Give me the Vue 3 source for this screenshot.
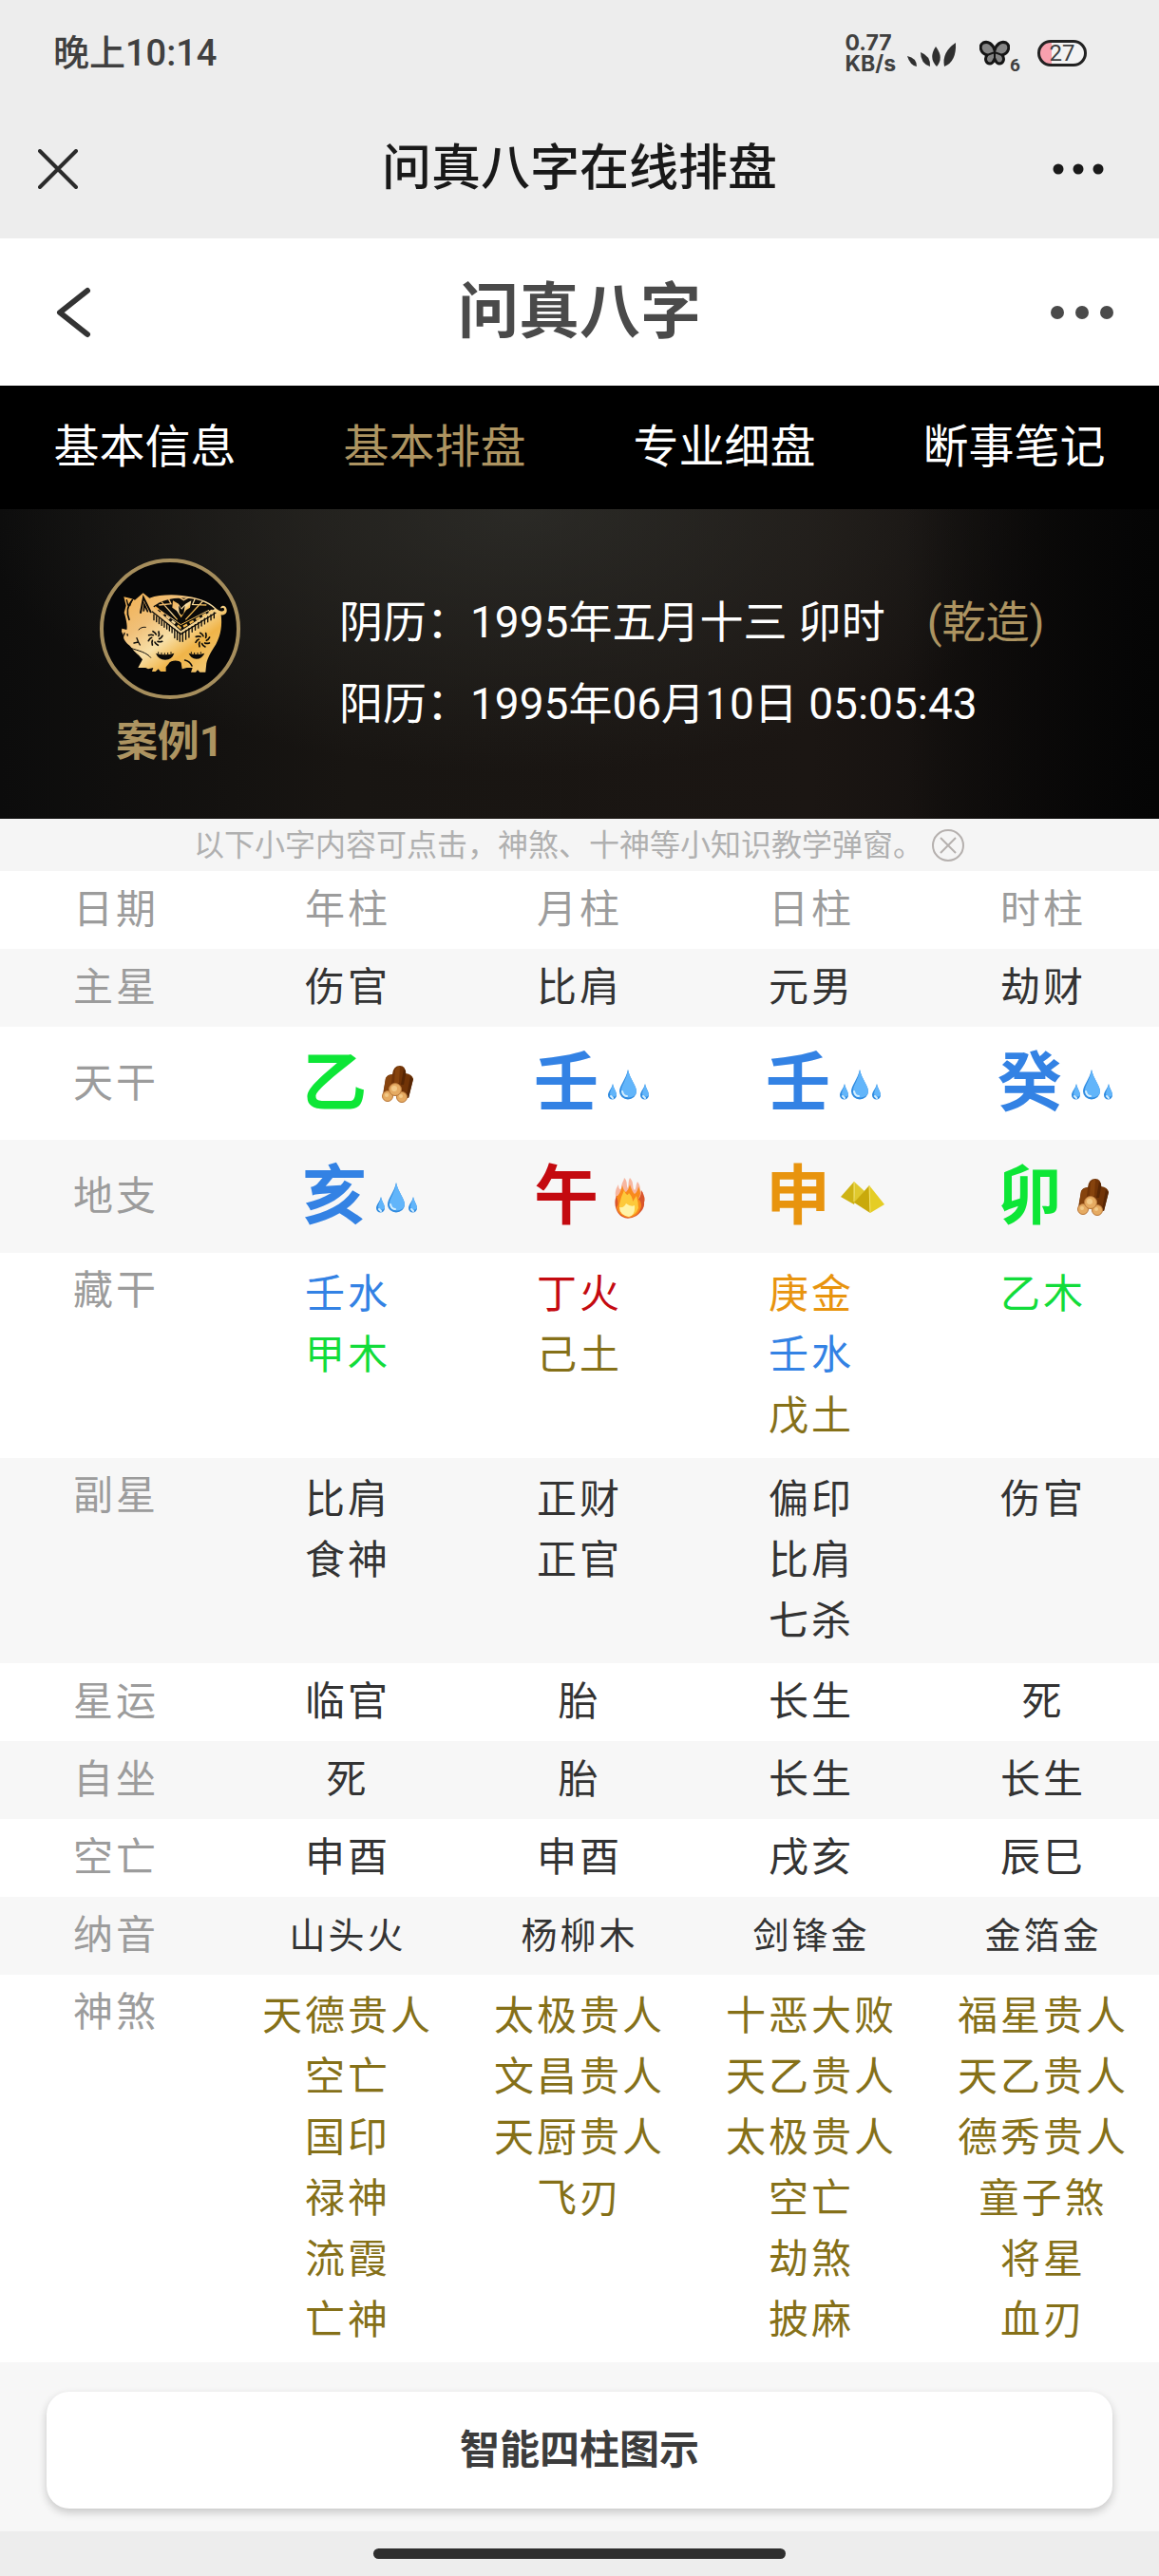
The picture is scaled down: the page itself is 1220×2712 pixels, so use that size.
<script setup>
import { ref } from 'vue'

const tabs = ['基本信息', '基本排盘', '专业细盘', '断事笔记']
const activeTab = ref(1)
const showHint = ref(true)

const heads = ['年柱', '月柱', '日柱', '时柱']
const stems = [
  { char: '乙', kind: 'wood' },
  { char: '壬', kind: 'water' },
  { char: '壬', kind: 'water' },
  { char: '癸', kind: 'water' },
]
const branches = [
  { char: '亥', kind: 'water' },
  { char: '午', kind: 'fire' },
  { char: '申', kind: 'metal' },
  { char: '卯', kind: 'wood' },
]
const rows = [
  { label: '主星', cells: ['伤官', '比肩', '元男', '劫财'] },
  { label: '天干', big: stems },
  { label: '地支', big: branches },
  {
    label: '藏干',
    lists: [
      [['壬水', 'water'], ['甲木', 'wood']],
      [['丁火', 'fire'], ['己土', 'earth']],
      [['庚金', 'metal'], ['壬水', 'water'], ['戊土', 'earth']],
      [['乙木', 'wood']],
    ],
  },
  {
    label: '副星',
    lists: [
      [['比肩'], ['食神']],
      [['正财'], ['正官']],
      [['偏印'], ['比肩'], ['七杀']],
      [['伤官']],
    ],
  },
  { label: '星运', cells: ['临官', '胎', '长生', '死'] },
  { label: '自坐', cells: ['死', '胎', '长生', '长生'] },
  { label: '空亡', cells: ['申酉', '申酉', '戌亥', '辰巳'] },
  { label: '纳音', small: true, cells: ['山头火', '杨柳木', '剑锋金', '金箔金'] },
  {
    label: '神煞',
    lists: [
      ['天德贵人', '空亡', '国印', '禄神', '流霞', '亡神'],
      ['太极贵人', '文昌贵人', '天厨贵人', '飞刃'],
      ['十恶大败', '天乙贵人', '太极贵人', '空亡', '劫煞', '披麻'],
      ['福星贵人', '天乙贵人', '德秀贵人', '童子煞', '将星', '血刃'],
    ].map((col) => col.map((t) => [t, 'earth'])),
  },
]

const petals = [0, 45, 90, 135, 180, 225, 270, 315]
const fringe = Array.from({ length: 22 }, (_, i) => {
  const t = i / 21
  return t < 0.5
    ? { x: 126 + t * 2 * 86, y: 96 + t * 2 * 60 }
    : { x: 212 + (t - 0.5) * 2 * 104, y: 156 - (t - 0.5) * 2 * 66 }
})
</script>

<template>
  <div class="page">
    <header class="system">
      <div class="status">
        <time class="clock">晚上10:14</time>
        <div class="indicators">
          <div class="speed">0.77<br>KB/s</div>
          <svg class="signal" viewBox="0 0 52 26" fill="#2f2f2f" aria-hidden="true">
            <path d="M0 14Q10 16 10 25Q3 24 0 14Z" />
            <path d="M14 10Q25 14 24 25Q14 22 14 10Z" />
            <path d="M30 4Q39 16 31 25Q22 16 30 4Z" />
            <path d="M51 0Q52 20 39 25Q36 10 51 0Z" />
          </svg>
          <svg class="butterfly" viewBox="0 0 32 28" aria-hidden="true">
            <path d="M16 11C14 4 9 1 4 3C-1 6 1 14 8 16C5 20 7 25 11 25C14 25 15 22 16 20C17 22 18 25 21 25C25 25 27 20 24 16C31 14 33 6 28 3C23 1 18 4 16 11Z" fill="#858585" stroke="#151515" stroke-width="3" stroke-linejoin="round" />
            <path d="M16 10V20M8 16L16 13L24 16" fill="none" stroke="#151515" stroke-width="2" />
          </svg>
          <span class="six">6</span>
          <div class="battery"><span>27</span></div>
        </div>
      </div>
      <div class="titlebar">
        <button class="icon" aria-label="关闭">
          <svg width="42" height="42" viewBox="0 0 42 42" fill="none" stroke="#2b2b2b" stroke-width="4" stroke-linecap="round"><path d="M2 2L40 40M40 2L2 40" /></svg>
        </button>
        <h1>问真八字在线排盘</h1>
        <button class="icon" aria-label="更多">
          <svg width="54" height="12" viewBox="0 0 54 12" fill="#1a1a1a"><circle cx="6" cy="6" r="5.5" /><circle cx="27" cy="6" r="5.5" /><circle cx="48" cy="6" r="5.5" /></svg>
        </button>
      </div>
    </header>

    <div class="appbar">
      <button class="icon" aria-label="返回">
        <svg width="40" height="54" viewBox="0 0 40 54" fill="none" stroke="#333" stroke-width="6" stroke-linecap="round" stroke-linejoin="round"><path d="M34 4L5 27L34 50" /></svg>
      </button>
      <h2>问真八字</h2>
      <button class="icon" aria-label="菜单">
        <svg width="68" height="16" viewBox="0 0 68 16" fill="#4a4a4a"><circle cx="8" cy="8" r="7" /><circle cx="34" cy="8" r="7" /><circle cx="60" cy="8" r="7" /></svg>
      </button>
    </div>

    <nav class="tabs">
      <button v-for="(t, i) in tabs" :key="t" :class="{ active: i === activeTab }" @click="activeTab = i">{{ t }}</button>
    </nav>

    <section class="hero">
      <div class="person">
        <svg width="150" height="150" viewBox="0 0 150 150" aria-hidden="true">
          <defs>
            <linearGradient id="gold" x1="0" y1="0" x2="1" y2="1">
              <stop offset="0" stop-color="#f3b04e" />
              <stop offset="0.3" stop-color="#f0c079" />
              <stop offset="0.5" stop-color="#f8e0a8" />
              <stop offset="0.68" stop-color="#f0b448" />
              <stop offset="1" stop-color="#f2cf86" />
            </linearGradient>
          </defs>
          <circle cx="75" cy="75" r="72" fill="#060607" stroke="#a68e5d" stroke-width="4" />
          <g transform="translate(16 28) scale(.3333)">
            <path fill="url(#gold)" d="M31 40L56 46L66 50L92 28L112 44C140 34 180 32 215 36C255 40 300 52 324 78C340 90 350 86 348 78C346 72 340 76 336 76C338 64 354 66 356 80C358 94 346 98 338 97C342 130 338 160 322 190C306 214 296 232 292 250L289 278H271L264 271L258 278H243L248 264H230L215 268L212 248C206 240 180 238 172 252L164 262V276H147L140 268L131 276H120L124 264L108 268L100 264L76 264L90 238L78 224C62 214 58 200 44 190C36 182 26 168 32 165L24 150L25 140L40 144C44 134 36 100 32 90L38 68Z" />
            <g fill="none" stroke="#0b0a08" stroke-width="5" stroke-linecap="round">
              <path d="M58 50C42 68 40 92 48 112" />
              <path d="M40 50L44 66M54 56L50 68" stroke-width="4" />
              <path d="M84 90L93 42L116 88" stroke-width="6" />
              <path d="M94 84L96 64L106 86" stroke-width="5" />
              <path d="M78 144Q86 134 100 136" stroke-width="3" />
              <path d="M72 170L77 183L63 186M77 183L82 192M33 154L32 160M42 158L43 162" stroke-width="4" />
              <path d="M52 202C78 210 104 216 116 232" stroke-width="3" />
              <path d="M224 240Q240 244 246 258" />
            </g>
            <path fill="#0b0a08" d="M132 218Q160 228 190 218Q184 238 162 239Q140 238 132 218ZM236 218Q262 226 286 218Q278 236 260 236Q242 234 236 218Z" />
            <g stroke="#0b0a08" stroke-width="3">
              <path d="M140 214V220M150 216V222M160 217V223M170 216V222M180 214V220M244 214V220M254 216V222M264 216V222M274 214V220" />
            </g>
            <g fill="none" stroke="#0b0a08" stroke-width="5" stroke-linecap="round">
              <path v-for="a in petals" :key="'l' + a" d="M143 173Q149 171 153 163" :transform="`rotate(${a} 131 171)`" />
              <path v-for="a in petals" :key="'r' + a" d="M292 178Q298 176 302 168" :transform="`rotate(${a} 280 176)`" />
            </g>
            <path fill="#0b0a08" d="M124 70C170 34 270 32 318 78L211 148Z" />
            <path fill="none" stroke="#0b0a08" stroke-width="4" d="M120 86L211 158L322 90" />
            <g fill="none" stroke="url(#gold)">
              <path d="M136 76L211 128L300 82" stroke-width="3" />
              <path d="M129 72L211 139L312 82" stroke-width="7" stroke-dasharray="14 9" />
              <path d="M150 56L200 112M280 54L226 112M142 66L180 62L172 46M292 66L248 64L256 46M204 40L220 50L236 42" stroke-width="4" />
            </g>
            <path fill="url(#gold)" d="M186 52L204 62L212 76L226 62L244 52L240 74L228 82L212 106L198 84L184 74Z" />
            <path fill="#0b0a08" d="M204 68L214 80L224 68L220 92L213 98L206 90Z" />
            <g stroke="#0b0a08" stroke-width="4" stroke-linecap="round">
              <path v-for="(f, i) in fringe" :key="i" :d="`M${f.x} ${f.y}v${i > 7 && i < 14 ? 28 : 17}`" />
            </g>
          </g>
        </svg>
        <strong>案例1</strong>
      </div>
      <div class="dates">
        <p>阴历：1995年五月十三 卯时<em>(乾造)</em></p>
        <p>阳历：1995年06月10日 05:05:43</p>
      </div>
    </section>

    <div v-if="showHint" class="hint">
      <span>以下小字内容可点击，神煞、十神等小知识教学弹窗。</span>
      <button class="icon" aria-label="关闭提示" @click="showHint = false">
        <svg width="36" height="36" viewBox="0 0 36 36" fill="none" stroke="#b5b0ae" stroke-width="2"><circle cx="18" cy="18" r="16" /><path d="M10 10L26 26M26 10L10 26" /></svg>
      </button>
    </div>

    <table class="chart">
      <thead>
        <tr>
          <th scope="col">日期</th>
          <th v-for="h in heads" :key="h" scope="col">{{ h }}</th>
        </tr>
      </thead>
      <tbody>
        <tr v-for="r in rows" :key="r.label" :class="{ tall: r.big, multi: r.lists, small: r.small }">
          <th scope="row">{{ r.label }}</th>
          <template v-if="r.cells">
            <td v-for="(c, i) in r.cells" :key="i">{{ c }}</td>
          </template>
          <template v-else-if="r.big">
            <td v-for="(b, i) in r.big" :key="i">
              <div class="pillar" :class="b.kind">
                <b>{{ b.char }}</b>
                <svg width="50" height="50" viewBox="0 0 50 50" aria-hidden="true">
                  <g v-if="b.kind === 'water'">
                    <path fill="#318ce0" d="M24 10C22 20 15 27 15 33A9 8.500 0 0 0 33 33C33 27 26 20 24 10ZM8 25C7 30 3 33 3 37A4.500 4.500 0 0 0 12 37C12 33 9 30 8 25ZM42 25C41 30 37 33 37 37A4.500 4.500 0 0 0 46 37C46 33 43 30 42 25Z" />
                    <path fill="#62b5fa" d="M24 10C23 20 17 27 17 32A8 7 0 0 0 33 33C33 27 26 20 24 10ZM8 25C7 30 5 33 5 36A4 4 0 0 0 12 37C12 33 9 30 8 25ZM42 25C41 30 39 33 39 36A4 4 0 0 0 46 37C46 33 43 30 42 25Z" />
                    <path fill="none" stroke="#d5efff" stroke-width="2" stroke-linecap="round" d="M18 33Q19 38 23 38M6 38L8 40M40 38L42 40" />
                  </g>
                  <g v-else-if="b.kind === 'wood'">
                    <path fill="#713407" d="M10 36L13 19Q15 15 20 15Q21 6 28 6Q34 6 34 14Q41 15 42 20L37 40L28 38Z" />
                    <path fill="#86430d" d="M13 19Q16 15 20 16L18 32H11ZM23 10Q26 6 28 7L27 24H22Z" />
                    <path fill="#572604" d="M32 9Q35 11 34 15L32 26H29ZM39 17L42 20L37 40L35 38Z" />
                    <g fill="#e6ab62" stroke="#b9783a" stroke-width="1">
                      <circle cx="15" cy="38" r="5.500" /><circle cx="30" cy="39" r="5.500" /><circle cx="23" cy="31" r="6.500" />
                    </g>
                    <g fill="#f3ca88"><circle cx="22" cy="30" r="3" /><circle cx="14" cy="37" r="2" /><circle cx="29" cy="38" r="2" /></g>
                  </g>
                  <g v-else-if="b.kind === 'fire'">
                    <path fill="#f6a58a" opacity=".8" d="M13 30C9 22 11 17 14 12C14 17 16 18 17 16C17 10 20 8 20 5C24 8 22 14 24 16C25 12 24 9 26 5C31 10 28 16 31 18C33 16 32 13 34 9C39 15 35 20 40 20L36 34Z" />
                    <path fill="#d9552c" d="M12 24C8 32 12 43 18 46Q24 50 33 45Q42 38 41 31Q43 26 38 18Q38 27 33 28Z" />
                    <path fill="#f98a1c" d="M12 25Q16 22 18 13Q20 20 22 20Q25 17 26 12Q29 21 31 22Q34 20 35 14Q39 22 35 27Q40 32 37 38Q34 46 25 47Q13 45 12 36Q15 33 12 25Z" />
                    <path fill="#fdc93b" d="M15 33Q17 24 20 18Q23 26 25 21Q29 25 29 30L33 24Q35 31 35 37Q32 45 24 46Q14 43 15 33Z" />
                    <path fill="#fff3a8" d="M15 36Q20 37 22 32Q27 36 31 34Q32 44 25 46Q15 44 15 36Z" />
                  </g>
                  <g v-else>
                    <path fill="#ceb315" d="M4 25L18 9L19 30L18 33Z" />
                    <path fill="#e0c92d" d="M18 9L29 19L19 31Z" />
                    <path fill="#c9a90b" d="M18 31L34 13L35 42Z" />
                    <path fill="#e5cd25" d="M34 13L50 33L35 42Z" />
                    <path fill="none" stroke="#f4e36a" d="M34 13L35 42M18 9V30" />
                  </g>
                </svg>
              </div>
            </td>
          </template>
          <template v-else>
            <td v-for="(col, i) in r.lists" :key="i">
              <ul>
                <li v-for="(item, j) in col" :key="j" :class="item[1]">{{ item[0] }}</li>
              </ul>
            </td>
          </template>
        </tr>
      </tbody>
    </table>

    <div class="actions">
      <button>智能四柱图示</button>
    </div>
    <footer class="home"><i></i></footer>
  </div>
</template>

<style>
body {
  margin: 0;
  background: #f7f7f7;
}
</style>

<style scoped>
.page {
  font-family: Roboto, "Noto Sans CJK SC", sans-serif;
  line-height: 1.5;
  color: #333;
  background: #f7f7f7;
}
button {
  font-family: inherit;
  line-height: inherit;
  border: 0;
  padding: 0;
  background: none;
  color: inherit;
}
.icon {
  display: flex;
}
h1,
h2,
p,
ul {
  margin: 0;
  padding: 0;
  list-style: none;
}
.system {
  background: #ededed;
}
.status {
  display: flex;
  justify-content: space-between;
  align-items: center;
  height: 104px;
  padding: 8px 76px 0 56px;
  box-sizing: border-box;
}
.clock {
  font-size: 38px;
  font-weight: 500;
  color: #404040;
}
.indicators {
  display: flex;
  align-items: center;
}
.speed {
  font-family: Inter, sans-serif;
  font-size: 23px;
  line-height: 22px;
  font-weight: 700;
  color: #404040;
}
.signal {
  width: 52px;
  height: 26px;
  margin: 4px 24px 0 12px;
}
.butterfly {
  width: 32px;
  height: 28px;
}
.six {
  align-self: flex-end;
  font-size: 19px;
  line-height: 18px;
  font-weight: 700;
  color: #404040;
}
.battery {
  width: 52px;
  height: 28px;
  margin-left: 18px;
  box-sizing: border-box;
  border: 3px solid #222;
  border-radius: 14px;
  background: linear-gradient(90deg, #f8a0ae 26%, #f3f3f3 26%);
  font-size: 24px;
  line-height: 22px;
  text-align: center;
  color: #404040;
}
.titlebar,
.appbar {
  display: grid;
  grid-template-columns: 1fr auto 1fr;
  align-items: center;
}
.titlebar .icon:first-child,
.appbar .icon:first-child {
  justify-self: start;
}
.titlebar .icon:last-child,
.appbar .icon:last-child {
  justify-self: end;
}
.titlebar {
  height: 147px;
  padding: 0 40px;
}
.titlebar .icon:last-child {
  padding-right: 18px;
}
h1 {
  font-size: 52px;
  line-height: 76px;
  font-weight: 500;
  color: #191919;
}
.appbar {
  height: 155px;
  padding: 0 47px;
  background: #fff;
}
.appbar .icon:first-child {
  padding-left: 11px;
}
h2 {
  font-size: 64px;
  line-height: 92px;
  font-weight: 700;
  color: #4a4a4a;
}
.tabs {
  display: flex;
  background: #000;
}
.tabs button {
  flex: 1;
  height: 130px;
  font-size: 48px;
  color: #fff;
}
.tabs .active {
  color: #ad9461;
}
.hero {
  display: flex;
  height: 326px;
  box-sizing: border-box;
  background:
    linear-gradient(90deg, transparent 78%, #050505 100%),
    radial-gradient(ellipse at 45% 0%, #2f2f2bcc, transparent 60%),
    linear-gradient(90deg, #0c0c0c, #181512 30%, #1b1613 70%, #0b0a0a);
}
.person {
  display: flex;
  flex-direction: column;
  align-items: center;
  width: 357px;
  padding-top: 51px;
  color: #ad9461;
}
.person strong {
  margin-top: 12px;
  font-size: 44px;
  line-height: 64px;
  font-weight: 700;
}
.dates {
  padding-top: 76px;
  font-size: 46px;
  line-height: 86px;
  color: #fff;
}
.dates em {
  margin-left: 44px;
  font-style: normal;
  color: #ad9461;
}
.hint {
  display: flex;
  justify-content: center;
  align-items: center;
  gap: 8px;
  height: 55px;
  background: #f5f5f5;
  font-size: 32px;
  color: #b0b0b0;
}
.chart {
  width: 100%;
  table-layout: fixed;
  border-collapse: collapse;
  background: #fff;
  font-size: 42px;
  line-height: 64px;
  letter-spacing: 3px;
  text-align: center;
}
.chart th,
.chart td {
  height: 82px;
  padding: 0;
}
.chart th {
  font-weight: 400;
  color: #9c9c9c;
}
.chart tbody tr:nth-child(odd) {
  background: #f7f7f7;
}
.chart .tall th,
.chart .tall td {
  height: 119px;
}
.chart .multi th,
.chart .multi td {
  padding: 12px 0;
  height: auto;
  vertical-align: top;
}
.chart .multi th {
  line-height: 56px;
}
.chart .small td {
  font-size: 38px;
}
.pillar {
  display: flex;
  justify-content: center;
  align-items: center;
  gap: 7px;
  padding-left: 29px;
  letter-spacing: 0;
}
.pillar b {
  font-size: 68px;
  line-height: 100px;
  font-weight: 700;
}
.water {
  color: #3382e4;
}
.wood {
  color: #12dc3a;
}
.fire {
  color: #c40a10;
}
.metal {
  color: #e8940e;
}
.earth {
  color: #857018;
}
.pillar.wood {
  color: #0de636;
}
.actions {
  padding: 31px 49px 24px;
}
.actions button {
  display: block;
  width: 100%;
  height: 123px;
  border-radius: 24px;
  background: #fff;
  box-shadow: 0 4px 10px #0003;
  font-size: 42px;
  font-weight: 700;
  color: #3c3c3c;
}
.home {
  display: flex;
  justify-content: center;
  padding: 18px 0 19px;
  background: #ededed;
}
.home i {
  width: 434px;
  height: 11px;
  border-radius: 6px;
  background: #2e2e2e;
}
</style>
